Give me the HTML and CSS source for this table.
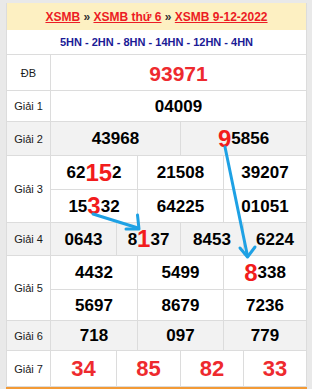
FILE: index.html
```html
<!DOCTYPE html>
<html lang="vi">
<head>
<meta charset="utf-8">
<title>XSMB 9-12-2022</title>
<link rel="stylesheet" href="styles.css">
</head>
<body>
<div class="page">
  <div class="board">
    <div class="head"><a href="#">XSMB</a> » <a href="#">XSMB thứ 6</a> » <a href="#">XSMB 9-12-2022</a></div>
    <div class="sub">5HN - 2HN - 8HN - 14HN - 12HN - 4HN</div>

    <div class="row r-db">
      <div class="lbl">ĐB</div>
      <div class="cells one"><div class="cell db">93971</div></div>
    </div>

    <div class="row r-g1">
      <div class="lbl">Giải 1</div>
      <div class="cells one"><div class="cell">04009</div></div>
    </div>

    <div class="row r-g2 alt">
      <div class="lbl">Giải 2</div>
      <div class="cells two">
        <div class="cell">43968</div>
        <div class="cell"><span class="hl">9</span>5856</div>
      </div>
    </div>

    <div class="row r-g3">
      <div class="lbl">Giải 3</div>
      <div class="cells three g3">
        <div class="cell">62<span class="hl">15</span>2</div>
        <div class="cell">21508</div>
        <div class="cell">39207</div>
        <div class="cell">15<span class="hl">3</span>32</div>
        <div class="cell">64225</div>
        <div class="cell">01051</div>
      </div>
    </div>

    <div class="row r-g4 alt">
      <div class="lbl">Giải 4</div>
      <div class="cells four">
        <div class="cell">0643</div>
        <div class="cell">8<span class="hl">1</span>37</div>
        <div class="cell">8453</div>
        <div class="cell">6224</div>
      </div>
    </div>

    <div class="row r-g5">
      <div class="lbl">Giải 5</div>
      <div class="cells three g5">
        <div class="cell">4432</div>
        <div class="cell">5499</div>
        <div class="cell"><span class="hl">8</span>338</div>
        <div class="cell">5697</div>
        <div class="cell">8679</div>
        <div class="cell">7236</div>
      </div>
    </div>

    <div class="row r-g6 alt">
      <div class="lbl">Giải 6</div>
      <div class="cells three">
        <div class="cell">718</div>
        <div class="cell">097</div>
        <div class="cell">779</div>
      </div>
    </div>

    <div class="row r-g7">
      <div class="lbl">Giải 7</div>
      <div class="cells four">
        <div class="cell red">34</div>
        <div class="cell red">85</div>
        <div class="cell red">82</div>
        <div class="cell red">33</div>
      </div>
    </div>
  </div>
  <div class="bar"></div>

  <svg class="arrows" width="312" height="389" viewBox="0 0 312 389" aria-hidden="true">
    <g fill="none" stroke="#1ea1e4" stroke-width="3" stroke-linecap="round" stroke-linejoin="round">
      <path d="M225 147 L247.5 256"/>
      <path d="M240 248 L247.5 257 L255 247"/>
      <path d="M93 214 L138 228"/>
      <path d="M137.5 215 L139 229 L126 229"/>
    </g>
  </svg>
</div>
</body>
</html>
```

FILE: styles.css
```css
* { box-sizing: border-box; }

html, body {
  margin: 0;
  padding: 0;
  background: #e9e9e9;
}

body {
  font-family: "Liberation Sans", Arial, sans-serif;
  color: #000;
}

.page {
  position: relative;
  width: 312px;
  height: 389px;
  overflow: hidden;
  padding: 3px 5px 0 6px;
}

.board {
  background: #fff;
  border-left: 1px solid #dcdcdc;
  border-right: 1px solid #dcdcdc;
}

.head {
  height: 27px;
  line-height: 28px;
  background: #fdf0c2;
  text-align: center;
  font-size: 12px;
  font-weight: bold;
  color: #333;
  white-space: nowrap;
}

.head a {
  color: #ec1c24;
  text-decoration: underline;
}

.sub {
  height: 25px;
  line-height: 24px;
  border-bottom: 1px solid #dcdcdc;
  text-align: center;
  font-size: 11px;
  font-weight: bold;
  color: #1b1b96;
  white-space: nowrap;
}

.row {
  display: grid;
  grid-template-columns: 43px 1fr;
  column-gap: 1px;
  background: #dcdcdc;
  border-bottom: 1px solid #dcdcdc;
}

.lbl {
  background: #fff;
  display: flex;
  align-items: center;
  justify-content: center;
  font-size: 11px;
  color: #1a1a1a;
  white-space: nowrap;
}

.cells {
  display: grid;
  gap: 1px;
  background: #dcdcdc;
}

.cell {
  background: #fff;
  display: flex;
  align-items: center;
  justify-content: center;
  font-size: 17px;
  font-weight: bold;
  line-height: 1;
  white-space: nowrap;
}

.alt .lbl,
.alt .cell {
  background: #f2f2f2;
}

.one { grid-template-columns: 1fr; }
.two { grid-template-columns: 129fr 125fr; }
.three { grid-template-columns: 86fr 85fr 82fr; }
.four { grid-template-columns: 65fr 63fr 62fr 62fr; }

.r-db { height: 36px; }
.r-g1 { height: 31px; }
.r-g2 { height: 34px; }
.r-g3 { height: 67px; }
.g3 { grid-template-rows: 33px 32px; }
.r-g4 { height: 33px; }
.r-g5 { height: 65px; }
.g5 { grid-template-rows: 33px 30px; }
.r-g6 { height: 30px; }
.r-g7 { height: 36px; }

.cell.db {
  font-size: 21px;
  color: #ee2a2e;
  padding-top: 1px;
}

.cell.red {
  font-size: 22px;
  color: #ee2a2e;
}

.hl {
  font-size: 24px;
  color: #f21c1c;
}

.bar {
  height: 3px;
  background: #f39a36;
}

.arrows {
  position: absolute;
  top: 0;
  left: 0;
  pointer-events: none;
}
```
